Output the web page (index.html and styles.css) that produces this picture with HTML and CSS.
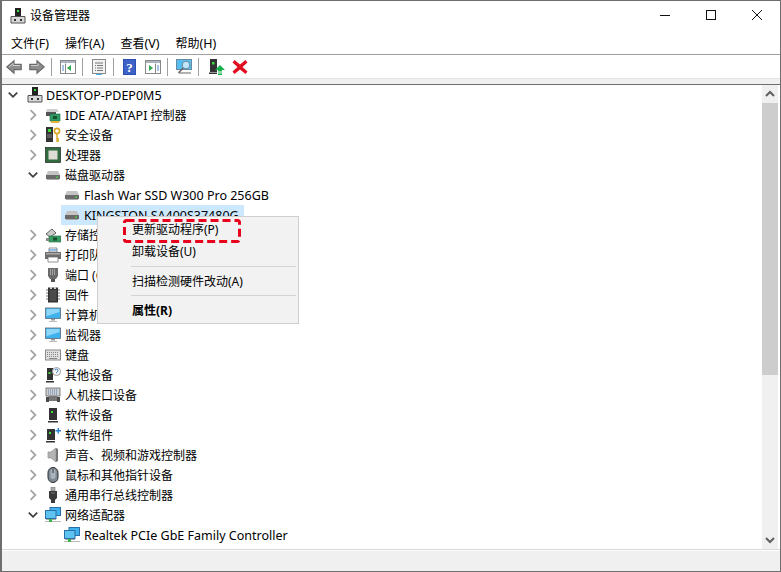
FILE: index.html
```html
<!DOCTYPE html>
<html lang="zh-CN">
<head>
<meta charset="utf-8">
<title>设备管理器</title>
<link rel="stylesheet" href="styles.css">
</head>
<body>
<svg class="defs" width="0" height="0">
  <defs>
    <symbol id="chev-r" viewBox="0 0 10 10"><path d="M3 1l4 4-4 4" fill="none" stroke="#a6a6a6" stroke-width="1.5"/></symbol>
    <symbol id="chev-d" viewBox="0 0 10 10"><path d="M1.500 3l3.500 3.500L8.500 3" fill="none" stroke="#404040" stroke-width="1.500"/></symbol>
    <symbol id="pc" viewBox="0 0 16 16"><rect x="5" y="0" width="6" height="8" fill="#222"/><rect x="7" y="2" width="2" height="2" fill="#3fdc3f"/><path d="M1 8.500h14v6.500H1z" fill="#d8d8d8" stroke="#555"/><path d="M4 11h2v2H4zM10 11h2v2h-2z" fill="#333"/></symbol>
    <symbol id="ide" viewBox="0 0 16 16"><path d="M2 2h10l2 3H1z" fill="#cfcfcf"/><path d="M1 5h10v4H1z" fill="#555"/><rect x="5" y="7" width="10" height="7" fill="#2f9a63" stroke="#1c6a44" stroke-width=".6"/><rect x="8" y="9" width="4" height="3" fill="#15502f"/><path d="M6 14h8v2H6z" fill="#e2b33c"/></symbol>
    <symbol id="sec" viewBox="0 0 16 16"><rect x="1" y="0" width="7" height="15" fill="#333"/><rect x="3" y="2" width="3" height="3" fill="#3fdc3f"/><path d="M2 8h5M2 10h5" stroke="#888"/><circle cx="12" cy="4" r="2.600" fill="none" stroke="#d9a520" stroke-width="1.600"/><path d="M12 7v8M12 12h2M12 14h2" stroke="#d9a520" stroke-width="1.400"/></symbol>
    <symbol id="cpu" viewBox="0 0 16 16"><rect x="0.500" y="0.500" width="15" height="15" fill="#2f6b3d" stroke="#333" stroke-width=".8"/><rect x="3.500" y="3.500" width="9" height="9" fill="#dcdcd4"/></symbol>
    <symbol id="disk" viewBox="0 0 16 16"><path d="M3 4h10l2 4H1z" fill="#c4c4c4"/><path d="M1 8h14v4H1z" fill="#6a6a6a"/><rect x="11" y="9.500" width="2" height="1.200" fill="#3fdc3f"/><path d="M2 12.500h12" stroke="#aaa"/></symbol>
    <symbol id="store" viewBox="0 0 16 16"><path d="M1 7l6-5 4 4-6 4z" fill="#ccc" stroke="#444" stroke-width=".8"/><rect x="4" y="9" width="12" height="6" fill="#3c9a63" stroke="#1c6a44" stroke-width=".6"/><rect x="8" y="10.500" width="4" height="3" fill="#15502f"/><path d="M1 11h3v3H1z" fill="#888"/></symbol>
    <symbol id="print" viewBox="0 0 16 16"><path d="M4 1h8v4H4z" fill="#fff" stroke="#666" stroke-width=".7"/><path d="M4 3h8" stroke="#4a90d9" stroke-width="1.200"/><path d="M0 5h16v7H0z" fill="#6d6d6d"/><rect x="1" y="6" width="14" height="1.500" fill="#aaa"/><path d="M3 10h10v5H3z" fill="#fff" stroke="#666" stroke-width=".7"/></symbol>
    <symbol id="port" viewBox="0 0 16 16"><path d="M3 1h10v8l-2 3H5L3 9z" fill="#6b6b6b"/><path d="M5 3h6M5 5h6M5 7h6" stroke="#ddd" stroke-dasharray="1 1"/><rect x="6" y="12" width="4" height="3" fill="#555"/></symbol>
    <symbol id="fw" viewBox="0 0 16 16"><rect x="3" y="0.500" width="10" height="15" fill="#333"/><path d="M5 0h2v2H5zM9 0h2v2H9z" fill="#ccc"/><rect x="4.500" y="3" width="7" height="11" fill="#4a4a4a"/><path d="M1 3h2M1 6h2M1 9h2M1 12h2M13 3h2M13 6h2M13 9h2M13 12h2" stroke="#777"/></symbol>
    <symbol id="mon" viewBox="0 0 16 16"><rect x="0.500" y="1" width="15" height="10.500" fill="#3fb2ee" stroke="#5a6a78" stroke-width=".8"/><path d="M1.500 2h13v3L2 9H1.500z" fill="#8ed6f8"/><path d="M6 12h4v1.500H6z" fill="#999"/><path d="M4 14h8v1H4z" fill="#bbb"/></symbol>
    <symbol id="kbd" viewBox="0 0 16 16"><rect x="0.500" y="3" width="15" height="10" fill="#dfdfdf" stroke="#8a8a8a"/><path d="M2 5.500h12M2 7.500h12M2 9.500h12" stroke="#888" stroke-dasharray="1 1"/><path d="M4 11.500h8" stroke="#888"/></symbol>
    <symbol id="other" viewBox="0 0 16 16"><path d="M2 1h6v12H2z" fill="#333"/><rect x="3.500" y="5" width="2" height="2" fill="#3fdc3f"/><path d="M1 14h8v1.500H1z" fill="#333"/><circle cx="11.500" cy="4.500" r="4" fill="#fff" stroke="#999"/><path d="M10 3.500a1.500 1.500 0 1 1 2 1.500l-.5.700v.6" fill="none" stroke="#2a6fc2"/></symbol>
    <symbol id="hid" viewBox="0 0 16 16"><rect x="1" y="1" width="14" height="8" fill="#cfcfcf" stroke="#666" stroke-width=".8"/><path d="M3 3h10M3 5h10M3 7h10" stroke="#5a7fae" stroke-dasharray="1 1"/><path d="M4 9h8l1 1v4H3v-4z" fill="#777"/><path d="M1 10h3v5H1zM12 10h3v5h-3z" fill="#4a4a4a"/></symbol>
    <symbol id="soft" viewBox="0 0 16 16"><path d="M4 1h8v12H4z" fill="#333"/><rect x="6" y="4" width="2" height="2" fill="#3fdc3f"/><path d="M3 14h10v1.500H3z" fill="#333"/></symbol>
    <symbol id="comp" viewBox="0 0 16 16"><path d="M2 2h8v11H2z" fill="#333"/><rect x="4" y="5" width="2" height="2" fill="#3fdc3f"/><path d="M1 14h9v1.500H1z" fill="#333"/><path d="M10.500 3h2V1h1.500v2h2v1.500h-2v2h-1.500v-2h-2z" fill="#2d86d6"/></symbol>
    <symbol id="sound" viewBox="0 0 16 16"><path d="M3 5h3l5-4v14l-5-4H3z" fill="#b4b4b4" stroke="#8c8c8c" stroke-width=".7"/><path d="M11 1v14l2-1V2z" fill="#777"/></symbol>
    <symbol id="mouse" viewBox="0 0 16 16"><rect x="3" y="0.500" width="10" height="15" rx="5" fill="#7d8a96" stroke="#2e2e2e"/><rect x="5.500" y="2" width="5" height="10" rx="2.500" fill="#a9b4be"/><path d="M8 2v4" stroke="#333"/></symbol>
    <symbol id="usb" viewBox="0 0 16 16"><path d="M6 0h4v4H6z" fill="#aaa" stroke="#666" stroke-width=".5"/><path d="M4 4h8v7l-2 2v3H6v-3L4 11z" fill="#3a3a3a"/><path d="M6 6h4" stroke="#777"/></symbol>
    <symbol id="net" viewBox="0 0 16 16"><rect x="5" y="0.500" width="10.500" height="8" fill="#3fb2ee" stroke="#2a6fa8"/><rect x="0.500" y="3.500" width="10.500" height="8" fill="#5fc3f2" stroke="#2a6fa8"/><path d="M1 12.500h10" stroke="#aaa"/><path d="M0 14h16v1H0z" fill="#bbb"/><path d="M4 12h3v3H4z" fill="#3cb54a"/></symbol>
  </defs>
</svg>
<div class="window">
  <header class="titlebar">
    <svg class="title-icon"><use href="#pc"/></svg>
    <span class="title-text">设备管理器</span>
    <div class="caption">
      <svg class="cap-btn" viewBox="0 0 46 29"><path d="M18 14.500h10" stroke="#111"/></svg>
      <svg class="cap-btn" viewBox="0 0 46 29"><rect x="18.500" y="9.500" width="9" height="9" fill="none" stroke="#111"/></svg>
      <svg class="cap-btn" viewBox="0 0 46 29"><path d="M18 9l10 10M28 9L18 19" stroke="#111" fill="none"/></svg>
    </div>
  </header>
  <nav class="menubar">
    <span>文件<span class="lat">(F)</span></span><span>操作<span class="lat">(A)</span></span><span>查看<span class="lat">(V)</span></span><span>帮助<span class="lat">(H)</span></span>
  </nav>
  <div class="toolbar">
    <svg class="tb" viewBox="0 0 16 16"><path d="M.8 8L8 1.800v3.500h7.200v5.400H8v3.500z" fill="#8e8e8e" stroke="#6a6a6a" stroke-width="1.200"/><path d="M3 8l4-3.500v2h7" fill="none" stroke="#cfcfcf"/></svg>
    <svg class="tb" viewBox="0 0 16 16"><path d="M15.200 8L8 1.800v3.500H.8v5.400H8v3.500z" fill="#8e8e8e" stroke="#6a6a6a" stroke-width="1.200"/><path d="M2 6.500h7v-2" fill="none" stroke="#cfcfcf"/></svg>
    <i class="sep"></i>
    <svg class="tb" viewBox="0 0 16 16"><rect x="0.500" y="1.500" width="15" height="13" fill="#fff" stroke="#888"/><path d="M1 2h14v2H1z" fill="#a9b4be"/><path d="M5.500 4.500v10" stroke="#888"/><path d="M11 6v6l-4-3z" fill="#2fa84f"/><path d="M2 7h2M2 9h2M2 11h2" stroke="#4a86c8"/></svg>
    <i class="sep"></i>
    <svg class="tb" viewBox="0 0 16 16"><rect x="1.500" y="0.500" width="13" height="14" fill="#f2f2f2" stroke="#8a8a8a"/><path d="M4 4h8M6 6.500h6M6 9h6M6 11.500h6" stroke="#777"/><path d="M4 6h1v1H4zM4 8.500h1v1H4zM4 11h1v1H4z" fill="#777"/><path d="M5 15h6v1H5z" fill="#3fb2ee"/></svg>
    <i class="sep"></i>
    <svg class="tb" viewBox="0 0 16 16"><rect x="1" y="0" width="13" height="16" fill="#2b4fb0"/><rect x="2" y="1" width="11" height="14" fill="#3f62c8"/><text x="7.500" y="13" class="help-q">?</text></svg>
    <svg class="tb" viewBox="0 0 16 16"><rect x="0.500" y="1.500" width="15" height="13" fill="#fff" stroke="#888"/><path d="M1 2h14v2H1z" fill="#a9b4be"/><path d="M10.500 4.500v10" stroke="#888"/><path d="M4 6v6l4-3z" fill="#2fa84f"/><path d="M12 7h2M12 9h2M12 11h2" stroke="#4a86c8"/></svg>
    <i class="sep"></i>
    <svg class="tb" viewBox="0 0 16 16"><rect x="0.500" y="0.500" width="15" height="10" fill="#55bdf0" stroke="#6a8aa0"/><path d="M3 14h12" stroke="#999" stroke-width="1.500"/><circle cx="10" cy="6" r="3.800" fill="#bfe6fa" stroke="#6a8aa0"/><path d="M7 9l-4.500 5" stroke="#666" stroke-width="1.500"/></svg>
    <i class="sep"></i>
    <svg class="tb tb-up" viewBox="0 0 16 16"><path d="M1 0h7v13H1z" fill="#333"/><rect x="3" y="3" width="2.500" height="2.500" fill="#3fdc3f"/><path d="M0 13.500h8V15H0z" fill="#333"/><path d="M11 6l5 5h-3v1.500H9V11H6z" fill="#17b34a"/><path d="M9 14h4M9 15.500h4" stroke="#17b34a"/></svg>
    <svg class="tb" viewBox="0 0 16 16"><path d="M2.500 1L8 5.500 13.500 1 15.500 3.500 10.500 8l5 4.500-2 2.500L8 10.500 2.500 15 .5 12.500l5-4.500-5-4.500z" fill="#e01020"/></svg>
  </div>
  <div class="band"></div>
  <main class="content">
    <div class="tree">
      <div class="row root"><svg class="chev"><use href="#chev-d"/></svg><svg class="ic"><use href="#pc"/></svg><span class="lat">DESKTOP-PDEP0M5</span></div>
      <div class="row l1"><svg class="chev"><use href="#chev-r"/></svg><svg class="ic"><use href="#ide"/></svg><span><span class="lat">IDE ATA/ATAPI</span> 控制器</span></div>
      <div class="row l1"><svg class="chev"><use href="#chev-r"/></svg><svg class="ic"><use href="#sec"/></svg><span>安全设备</span></div>
      <div class="row l1"><svg class="chev"><use href="#chev-r"/></svg><svg class="ic"><use href="#cpu"/></svg><span>处理器</span></div>
      <div class="row l1"><svg class="chev"><use href="#chev-d"/></svg><svg class="ic"><use href="#disk"/></svg><span>磁盘驱动器</span></div>
      <div class="row l2"><svg class="ic"><use href="#disk"/></svg><span class="lat">Flash War SSD W300 Pro 256GB</span></div>
      <div class="row l2"><div class="selected"><svg class="ic"><use href="#disk"/></svg><span class="lat">KINGSTON SA400S37480G</span></div></div>
      <div class="row l1"><svg class="chev"><use href="#chev-r"/></svg><svg class="ic"><use href="#store"/></svg><span>存储控制器</span></div>
      <div class="row l1"><svg class="chev"><use href="#chev-r"/></svg><svg class="ic"><use href="#print"/></svg><span>打印队列</span></div>
      <div class="row l1"><svg class="chev"><use href="#chev-r"/></svg><svg class="ic"><use href="#port"/></svg><span>端口 (COM 和 LPT)</span></div>
      <div class="row l1"><svg class="chev"><use href="#chev-r"/></svg><svg class="ic"><use href="#fw"/></svg><span>固件</span></div>
      <div class="row l1"><svg class="chev"><use href="#chev-r"/></svg><svg class="ic"><use href="#mon"/></svg><span>计算机</span></div>
      <div class="row l1"><svg class="chev"><use href="#chev-r"/></svg><svg class="ic"><use href="#mon"/></svg><span>监视器</span></div>
      <div class="row l1"><svg class="chev"><use href="#chev-r"/></svg><svg class="ic"><use href="#kbd"/></svg><span>键盘</span></div>
      <div class="row l1"><svg class="chev"><use href="#chev-r"/></svg><svg class="ic"><use href="#other"/></svg><span>其他设备</span></div>
      <div class="row l1"><svg class="chev"><use href="#chev-r"/></svg><svg class="ic"><use href="#hid"/></svg><span>人机接口设备</span></div>
      <div class="row l1"><svg class="chev"><use href="#chev-r"/></svg><svg class="ic"><use href="#soft"/></svg><span>软件设备</span></div>
      <div class="row l1"><svg class="chev"><use href="#chev-r"/></svg><svg class="ic"><use href="#comp"/></svg><span>软件组件</span></div>
      <div class="row l1"><svg class="chev"><use href="#chev-r"/></svg><svg class="ic"><use href="#sound"/></svg><span>声音、视频和游戏控制器</span></div>
      <div class="row l1"><svg class="chev"><use href="#chev-r"/></svg><svg class="ic"><use href="#mouse"/></svg><span>鼠标和其他指针设备</span></div>
      <div class="row l1"><svg class="chev"><use href="#chev-r"/></svg><svg class="ic"><use href="#usb"/></svg><span>通用串行总线控制器</span></div>
      <div class="row l1"><svg class="chev"><use href="#chev-d"/></svg><svg class="ic"><use href="#net"/></svg><span>网络适配器</span></div>
      <div class="row l2"><svg class="ic"><use href="#net"/></svg><span class="lat">Realtek PCIe GbE Family Controller</span></div>
    </div>
    <div class="scrollbar">
      <svg class="sb-btn" viewBox="0 0 16 18"><path d="M4 11l4-4 4 4" fill="none" stroke="#606060" stroke-width="2"/></svg>
      <div class="sb-track"><div class="sb-thumb"></div></div>
      <svg class="sb-btn" viewBox="0 0 16 18"><path d="M4 7l4 4 4-4" fill="none" stroke="#606060" stroke-width="2"/></svg>
    </div>
  </main>
  <footer class="statusbar"></footer>
  <div class="menu">
    <div class="menu-item">更新驱动程序(P)</div>
    <div class="menu-item tight">卸载设备(U)</div>
    <div class="menu-sep"></div>
    <div class="menu-item">扫描检测硬件改动(A)</div>
    <div class="menu-sep"></div>
    <div class="menu-item strong">属性(R)</div>
  </div>
  <svg class="callout" viewBox="0 0 118 24"><rect x="1.500" y="1.500" width="115" height="21" rx="2" class="callout-line"/></svg>
</div>
</body>
</html>
```

FILE: styles.css
```css
* { box-sizing: border-box; }
html, body { margin: 0; padding: 0; }
body {
  width: 781px;
  height: 572px;
  overflow: hidden;
  background: #fff;
  color: #000;
  font-family: "Noto Sans", "Noto Sans CJK SC", sans-serif;
  font-size: 12px;
}
.defs { position: absolute; }
.lat { font-size: 12.5px; }
.window {
  position: relative;
  width: 781px;
  height: 572px;
  display: flex;
  flex-direction: column;
  border-style: solid;
  border-color: #6e6e6e;
  border-width: 1px 1px 1px 2px;
  background: #fff;
}
.titlebar {
  height: 29px;
  display: flex;
  align-items: center;
  padding-left: 8px;
  flex: none;
}
.title-icon { width: 16px; height: 16px; margin-right: 4px; }
.title-text { flex: 1; font-size: 12px; padding-bottom: 2px; }
.caption { display: flex; }
.cap-btn { width: 46px; height: 29px; display: block; }
.menubar {
  height: 25px;
  display: flex;
  align-items: center;
  gap: 16px;
  padding: 2px 0 0 9px;
  border-bottom: 1px solid #a0a0a0;
  flex: none;
}
.toolbar {
  height: 23px;
  display: flex;
  align-items: center;
  padding-left: 4px;
  flex: none;
}
.tb { width: 16px; height: 16px; flex: none; }
.tb + .tb { margin-left: 7px; }
.tb-up { margin-left: 2px; }
.help-q { font: bold 13px "Liberation Serif", serif; fill: #fff; text-anchor: middle; }
.sep { width: 1px; height: 18px; background: #a0a0a0; margin: 0 8px 0 6px; flex: none; }
.band {
  height: 6px;
  background: #f0f0f0;
  border-top: 1px solid #e3e3e3;
  flex: none;
}
.content {
  flex: 1;
  min-height: 0;
  display: flex;
  border-top: 1px solid #6e6e6e;
  border-bottom: 1px solid #d8d8d8;
  overflow: hidden;
}
.tree { flex: 1; min-width: 0; overflow: hidden; }
.row {
  height: 20px;
  display: flex;
  align-items: center;
  white-space: nowrap;
}
.row.root { padding-left: 5px; }
.row.l1 { padding-left: 25px; }
.row.l2 { padding-left: 60px; }
.row.root .chev { margin-right: 8px; }
.row.root .ic { margin-right: 3px; }
.chev { width: 12px; height: 12px; margin-right: 6px; flex: none; }
.ic { width: 16px; height: 16px; margin-right: 4px; flex: none; }
.row.l2 .ic { margin-left: 2px; }
.selected {
  display: flex;
  align-items: center;
  height: 20px;
  width: 183px;
  background: #cce8ff;
  margin-left: -1px;
  padding-left: 1px;
}
.scrollbar {
  width: 16px;
  margin-right: 2px;
  background: #f0f0f0;
  display: flex;
  flex-direction: column;
  flex: none;
}
.sb-btn { width: 16px; height: 18px; flex: none; }
.sb-track { flex: 1; min-height: 0; }
.sb-thumb { width: 16px; height: 272px; background: #cdcdcd; }
.statusbar {
  flex: none;
  height: 21px;
  background: #f0f0f0;
  border-top: 1px solid #fff;
}
.menu {
  position: absolute;
  left: 95px;
  top: 215px;
  width: 202px;
  height: 108px;
  padding: 1px 2px;
  background: #f2f2f2;
  border: 1px solid #cfcfcf;
}
.menu-item { height: 23px; padding-left: 32px; line-height: 24px; white-space: nowrap; }
.menu-item.tight { line-height: 22px; }
.menu-item.strong { font-weight: 700; }
.menu-sep { height: 1px; background: #d4d4d4; margin: 2px 0 3px 31px; }
.callout {
  position: absolute;
  left: 121px;
  top: 218px;
  width: 118px;
  height: 24px;
}
.callout-line {
  fill: none;
  stroke: #e8001c;
  stroke-width: 3;
  stroke-dasharray: 8 4;
}
```
